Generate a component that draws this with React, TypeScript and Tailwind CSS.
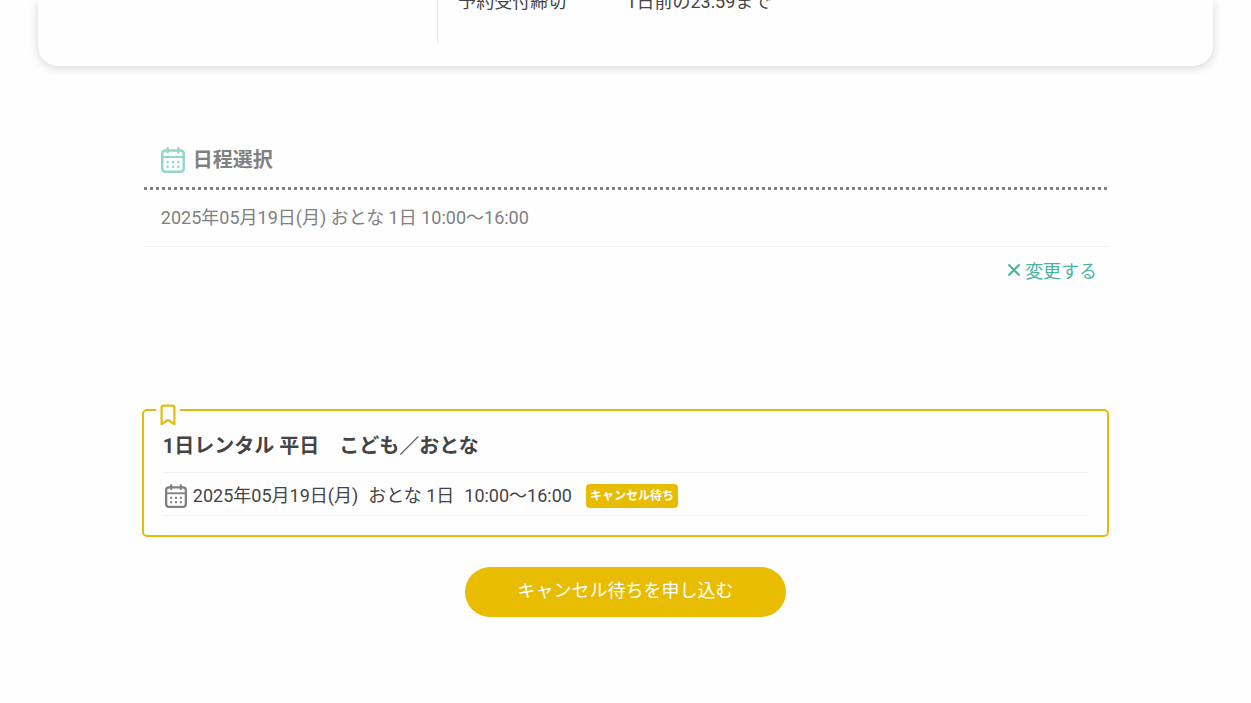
type IconProps = { className?: string };

const CalendarIcon = ({ className }: IconProps) => (
  <svg className={className} viewBox="0 0 24 26" fill="none" aria-hidden="true">
    <rect x="1.25" y="3.5" width="21.5" height="21.25" rx="3" stroke="currentColor" strokeWidth="2.5" />
    <path d="M1 10h22" stroke="currentColor" strokeWidth="2" />
    <path d="M6.7 1.3v4M17.3 1.3v4" stroke="currentColor" strokeWidth="2.5" strokeLinecap="round" />
    {[6.7, 12, 17.3].map((x) =>
      [15, 19.8].map((y) => <rect key={`${x}-${y}`} x={x - 1.1} y={y - 1.1} width="2.2" height="2.2" fill="currentColor" />),
    )}
  </svg>
);

const BookmarkIcon = ({ className }: IconProps) => (
  <svg className={className} viewBox="0 0 16 22" fill="none" aria-hidden="true">
    <path
      d="M3.2 1.6h9.6a1.6 1.6 0 0 1 1.6 1.6v17L8 16l-6.4 4.2v-17a1.6 1.6 0 0 1 1.6-1.6z"
      stroke="currentColor"
      strokeWidth="2.2"
      strokeLinejoin="round"
    />
  </svg>
);

const CloseIcon = ({ className }: IconProps) => (
  <svg className={className} viewBox="0 0 14 14" fill="none" aria-hidden="true">
    <path d="M1.5 1.5l11 11M12.5 1.5l-11 11" stroke="currentColor" strokeWidth="2.2" />
  </svg>
);

const plan = {
  title: '1日レンタル 平日　こども／おとな',
  date: '2025年05月19日(月)',
  course: 'おとな 1日',
  time: '10:00～16:00',
  status: 'キャンセル待ち',
};

const App = () => {
  return (
    <div className="min-h-screen overflow-hidden bg-[#fefefe] font-['Roboto','Noto_Sans_CJK_JP',sans-serif] text-lg text-[#444]">
      {/* Plan details */}
      <section className="mx-auto flex w-[94%] rounded-b-[20px] bg-[#fefefe] pb-[22px] shadow-[0_2px_10px_rgba(0,0,0,0.16)]">
        <div className="ml-[34%] -mt-3 h-14 flex-1 border-l border-gray-200 pl-5">
          <dl className="flex leading-7">
            <dt className="w-[168px]">予約受付締切</dt>
            <dd>1日前の23:59まで</dd>
          </dl>
        </div>
      </section>

      <main className="mx-auto w-[77%]">
        {/* Selected schedule */}
        <section className="pt-20 text-[#808080]">
          <h2 className="flex items-center gap-2 border-b-[3px] border-dotted border-[#808080] px-[17px] pb-[13px] text-xl font-bold">
            <CalendarIcon className="h-[26px] w-6 text-[#93d6cb]" />
            日程選択
          </h2>
          <p className="border-b border-dotted border-gray-200 px-[17px] py-[14px] leading-7">
            {plan.date} {plan.course} {plan.time}
          </p>
          <div className="flex justify-end pt-[11px] pr-[10px]">
            <a href="#" className="flex items-center gap-1 text-[#4bb3a1]">
              <CloseIcon className="mb-1 size-[14px]" />
              変更する
            </a>
          </div>
        </section>

        {/* Waitlist */}
        <section className="pt-[123px]">
          <div className="relative -mx-0.5 rounded-[5px] border-2 border-[#e3bb10] px-[19px] pt-[21px] pb-[19px]">
            <span className="absolute -top-[7px] left-3 bg-[#fefefe] px-1">
              <BookmarkIcon className="h-[22px] w-4 text-[#e3bb10]" />
            </span>
            <h3 className="border-b border-dotted border-gray-200 pb-3 text-xl font-bold">{plan.title}</h3>
            <div className="flex items-center gap-[10px] border-b border-dotted border-gray-200 pt-[9px] pb-[5px]">
              <span className="flex items-center gap-[6px] pl-0.5">
                <CalendarIcon className="h-6 w-[22px] text-[#808080]" />
                {plan.date}
              </span>
              <span>{plan.course}</span>
              <span>{plan.time}</span>
              <span className="ml-1 rounded-[4px] bg-[#e8bc00] px-1 text-xs leading-6 font-bold text-white">
                {plan.status}
              </span>
            </div>
          </div>
          <button
            type="button"
            className="mx-auto mt-[30px] mb-20 block h-[50px] w-1/3 rounded-full bg-[#e8bc00] pb-0.5 text-white"
          >
            {plan.status}を申し込む
          </button>
        </section>
      </main>
    </div>
  );
};

export default App;
